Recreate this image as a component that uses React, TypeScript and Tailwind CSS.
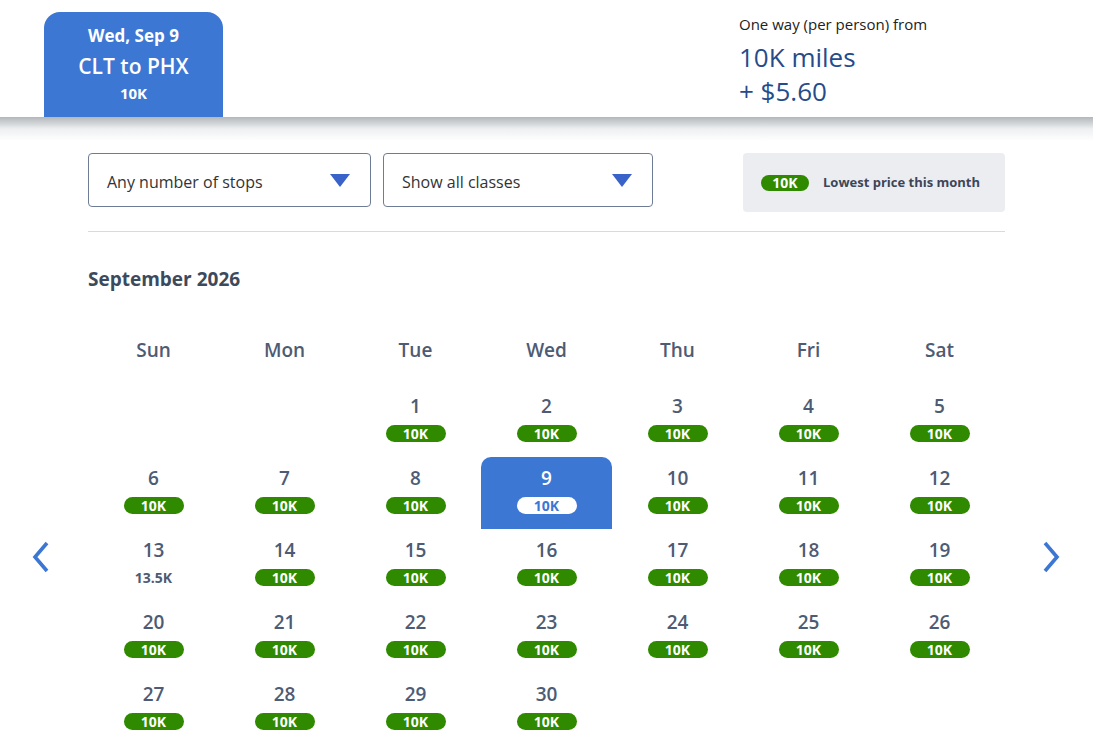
const WEEKDAYS = ['Sun', 'Mon', 'Tue', 'Wed', 'Thu', 'Fri', 'Sat'];

type Day = { day: number; price: string; lowest: boolean } | null;

// September 2026 starts on a Tuesday
const buildDays = (): Day[] => {
  const cells: Day[] = [null, null];
  for (let d = 1; d <= 30; d++) {
    const price = d === 13 ? '13.5K' : '10K';
    cells.push({ day: d, price, lowest: price === '10K' });
  }
  return cells;
};

function Triangle() {
  return (
    <svg width="20" height="13" viewBox="0 0 20 13" className="shrink-0">
      <path d="M0 0 H20 L10 13 Z" fill="#3a63c9" />
    </svg>
  );
}

function Chevron({ dir }: { dir: 'left' | 'right' }) {
  return (
    <svg width="18" height="32" viewBox="0 0 18 32" fill="none">
      <path
        d={dir === 'left' ? 'M15 2 L3 16 L15 30' : 'M3 2 L15 16 L3 30'}
        stroke="#3c77d4"
        strokeWidth="3.6"
      />
    </svg>
  );
}

function Dropdown({ label, width }: { label: string; width: string }) {
  return (
    <button
      className={`${width} h-[54px] flex items-center justify-between pl-[18px] pr-[20px] border border-[#6f7c95] rounded-[4px] bg-white text-[16px] text-[#333]`}
    >
      <span className="pt-[3px]">{label}</span>
      <Triangle />
    </button>
  );
}

function DayCell({ cell, selected }: { cell: Day; selected: boolean }) {
  if (!cell) return <div className="h-[72px]" />;
  return (
    <div
      className={`h-[72px] flex flex-col items-center pt-[9px] ${
        selected ? 'bg-[#3c77d4] rounded-t-[10px]' : ''
      }`}
    >
      <span
        className={`h-[24px] leading-[24px] text-[19px] font-semibold ${
          selected ? 'text-white' : 'text-[#4d5b74]'
        }`}
      >
        {cell.day}
      </span>
      {cell.lowest ? (
        <span
          className={`mt-[7px] w-[60px] h-[17px] rounded-full flex items-center justify-center text-[14px] font-bold leading-none ${
            selected ? 'bg-white text-[#3c77d4]' : 'bg-[#2f8a00] text-white'
          }`}
        >
          {cell.price}
        </span>
      ) : (
        <span className="mt-[7px] h-[17px] leading-[17px] text-[14px] font-bold text-[#4d5b74]">
          {cell.price}
        </span>
      )}
    </div>
  );
}

export default function App() {
  const days = buildDays();

  return (
    <div className="min-h-screen bg-white" style={{ fontFamily: '"Open Sans", sans-serif' }}>
      {/* Header */}
      <div className="h-[117px] flex">
        <div className="ml-[44px] mt-[12px] w-[179px] h-[105px] bg-[#3c77d4] rounded-t-[16px] flex flex-col items-center text-white">
          <span className="mt-[12px] text-[17px] font-bold leading-[24px]">Wed, Sep 9</span>
          <span className="mt-[4px] text-[21px] font-semibold leading-[28px]">CLT to PHX</span>
          <span className="mt-[3px] text-[15px] font-bold leading-[20px]">10K</span>
        </div>
        <div className="ml-[516px] pt-[13px] flex flex-col">
          <span className="text-[15px] leading-[22px] text-[#222]">One way (per person) from</span>
          <span className="mt-[5px] text-[26px] leading-[34px] text-[#264b8b]">10K miles</span>
          <span className="text-[26px] leading-[34px] text-[#264b8b]">+ $5.60</span>
        </div>
      </div>
      <div className="h-[24px] bg-gradient-to-b from-[#b3b7ba] via-[#eef0f1] to-white" />

      {/* Filters */}
      <div className="px-[88px] pt-[12px]">
        <div className="flex items-start">
          <Dropdown label="Any number of stops" width="w-[283px]" />
          <div className="ml-[12px]">
            <Dropdown label="Show all classes" width="w-[270px]" />
          </div>
          <div className="ml-auto w-[262px] h-[59px] bg-[#ecedf1] rounded-[4px] flex items-center pl-[18px]">
            <span className="w-[48px] h-[16px] rounded-full bg-[#2f8a00] text-white text-[14px] font-bold leading-none flex items-center justify-center">
              10K
            </span>
            <span className="ml-[14px] text-[13px] font-bold text-[#3c4659]">Lowest price this month</span>
          </div>
        </div>
        <div className="mt-[19px] h-px bg-[#d7dadf]" />
        <h2 className="mt-[34px] text-[19px] leading-[26px] font-bold text-[#3d4a5c]">September 2026</h2>
      </div>

      {/* Calendar */}
      <div className="flex mt-[38px]">
        <div className="w-[88px] flex justify-center pt-[211px]">
          <div className="mr-[6px]">
            <Chevron dir="left" />
          </div>
        </div>
        <div className="w-[917px]">
          <div className="grid grid-cols-7 h-[40px] items-center">
            {WEEKDAYS.map((w) => (
              <span key={w} className="text-center text-[19px] font-semibold text-[#4d5b74]">
                {w}
              </span>
            ))}
          </div>
          <div className="mt-[15px] grid grid-cols-7">
            {days.map((c, i) => (
              <DayCell key={i} cell={c} selected={c?.day === 9} />
            ))}
          </div>
        </div>
        <div className="w-[88px] flex justify-center pt-[211px]">
          <div className="ml-[4px]">
            <Chevron dir="right" />
          </div>
        </div>
      </div>
    </div>
  );
}
